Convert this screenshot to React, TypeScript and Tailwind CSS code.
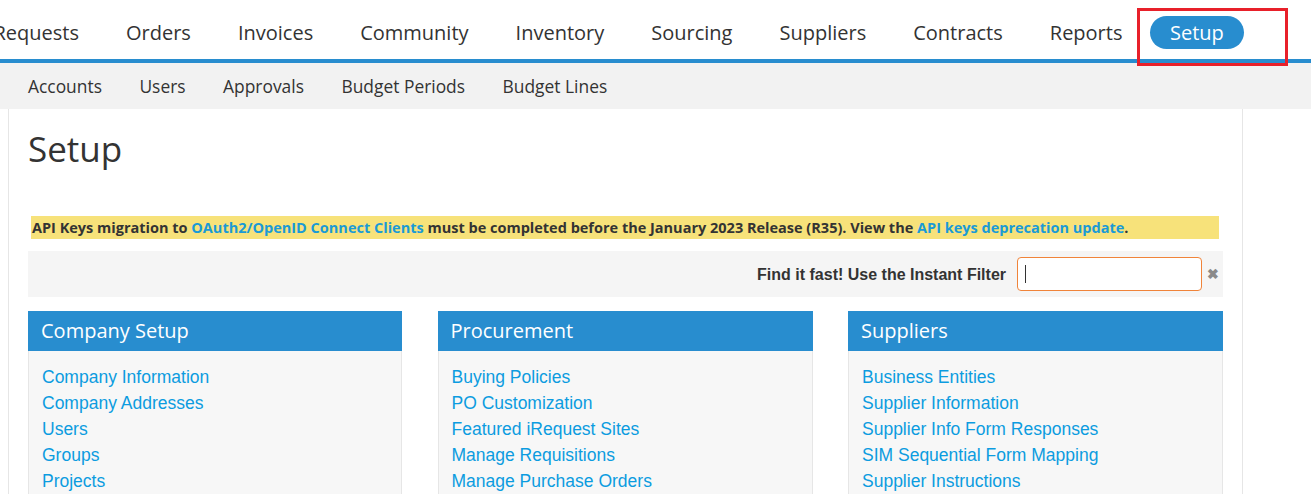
import React from "react";

const topNav = ["Requests", "Orders", "Invoices", "Community", "Inventory", "Sourcing", "Suppliers", "Contracts", "Reports"];
const subNav = ["Accounts", "Users", "Approvals", "Budget Periods", "Budget Lines"];

const sections = [
  {
    title: "Company Setup",
    links: ["Company Information", "Company Addresses", "Users", "Groups", "Projects"],
  },
  {
    title: "Procurement",
    links: ["Buying Policies", "PO Customization", "Featured iRequest Sites", "Manage Requisitions", "Manage Purchase Orders"],
  },
  {
    title: "Suppliers",
    links: ["Business Entities", "Supplier Information", "Supplier Info Form Responses", "SIM Sequential Form Mapping", "Supplier Instructions"],
  },
];

const openSans = { fontFamily: '"Open Sans", "Noto Sans", sans-serif' };
const arial = { fontFamily: '"Liberation Sans", Arial, sans-serif' };

function SectionCard({ title, links }: { title: string; links: string[] }) {
  return (
    <div className="flex flex-col">
      <div
        className="h-[40px] bg-[#288dcf] pl-[13px] flex items-center text-[20px] text-white"
        style={openSans}
      >
        {title}
      </div>
      <div className="bg-[#f7f7f7] border-x border-[#e6e6e6] pt-[13px] pl-[13px] pb-4 flex flex-col">
        {links.map((l) => (
          <a key={l} href="#" className="text-[17.5px] leading-[26px] text-[#0c9ce0]" style={arial}>
            {l}
          </a>
        ))}
      </div>
    </div>
  );
}

export default function App() {
  return (
    <div className="relative w-[1311px] h-[494px] overflow-hidden bg-white text-[#333]">
      {/* Main nav */}
      <div className="h-[59px] flex items-center ml-[-30px] pt-[6px]" style={openSans}>
        {topNav.map((item) => (
          <a key={item} href="#" className="px-[23.5px] text-[20px] text-[#333]">
            {item}
          </a>
        ))}
        <a href="#" className="ml-[4px] h-[33px] px-5 flex items-center rounded-full bg-[#288dcf] text-[20px] text-white">
          Setup
        </a>
      </div>
      <div className="h-[4px] bg-[#288dcf]" />

      {/* Sub nav */}
      <div className="h-[46px] bg-[#f2f2f2] flex items-center gap-[37.5px] pl-[28px]" style={openSans}>
        {subNav.map((item) => (
          <a key={item} href="#" className="text-[17.4px] text-[#333]">
            {item}
          </a>
        ))}
      </div>

      {/* Content */}
      <div className="ml-[8px] w-[1235px] border-x border-[#e6e6e6] pl-[19px] pr-[19px] h-[400px]">
        <h1 className="text-[35px] leading-none pt-[22px] h-[107px] text-[#333]" style={openSans}>
          Setup
        </h1>

        <div className="ml-[3px] mr-[4px] h-[23px] bg-[#f7e27a] flex items-center pl-[1px] text-[14.5px] font-bold text-[#333]" style={openSans}>
          <span>
            API Keys migration to <a href="#" className="text-[#1a9ad6]">OAuth2/OpenID Connect Clients</a> must be completed
            before the January 2023 Release (R35). View the{" "}
            <a href="#" className="text-[#1a9ad6]">API keys deprecation update</a>.
          </span>
        </div>

        <div className="mt-[12px] h-[46px] bg-[#f5f5f5] flex items-center justify-end pr-[4px]">
          <span className="text-[16px] font-bold text-[#333] mr-[11px] mt-[2px]" style={arial}>
            Find it fast! Use the Instant Filter
          </span>
          <div className="w-[185px] h-[34px] border border-[#f0843a] rounded-[4px] bg-white flex items-center pl-[7px]">
            <span className="w-px h-[18px] bg-[#333]" />
          </div>
          <span className="ml-[5px] text-[14px] font-bold text-[#8a8a8a]" style={arial}>
            ✖
          </span>
        </div>

        <div className="mt-[14px] grid grid-cols-[374px_375px_375px] gap-x-[35.5px]">
          {sections.map((s) => (
            <SectionCard key={s.title} title={s.title} links={s.links} />
          ))}
        </div>
      </div>

      {/* Annotation box */}
      <div className="absolute left-[1137px] top-[8px] w-[151px] h-[58px] border-[3px] border-[#e8202a]" />
    </div>
  );
}
